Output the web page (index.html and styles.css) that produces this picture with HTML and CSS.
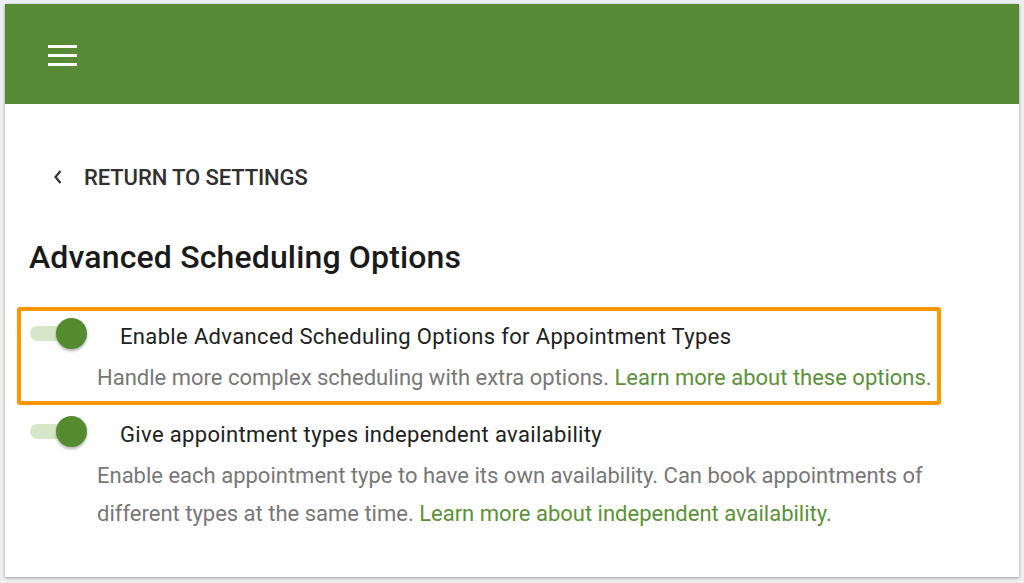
FILE: index.html
```html
<!DOCTYPE html>
<html lang="en">
<head>
<meta charset="utf-8">
<title>Advanced Scheduling Options</title>
<link rel="stylesheet" href="styles.css">
</head>
<body>
<div class="card">
  <header class="topbar">
    <svg class="menu" width="29" height="21" viewBox="0 0 29 21" aria-hidden="true">
      <rect x="0" y="0" width="29" height="3" fill="#fff"/>
      <rect x="0" y="9" width="29" height="3" fill="#fff"/>
      <rect x="0" y="18" width="29" height="3" fill="#fff"/>
    </svg>
  </header>
  <main class="content">
    <a class="back" href="#">
      <svg class="chev" width="10" height="16" viewBox="0 0 10 16" aria-hidden="true">
        <path d="M7.5 2 L2.5 8 L7.5 14" fill="none" stroke="#333" stroke-width="2.2"/>
      </svg>
      <span>RETURN TO SETTINGS</span>
    </a>
    <h1 class="title">Advanced Scheduling Options</h1>
    <div class="options">
      <div class="option highlight">
        <div class="row">
          <span class="toggle"><span class="track"></span><span class="thumb"></span></span>
          <span class="label">Enable Advanced Scheduling Options for Appointment Types</span>
        </div>
        <p class="desc">Handle more complex scheduling with extra options. <a href="#">Learn more about these options.</a></p>
      </div>
      <div class="option">
        <div class="row">
          <span class="toggle"><span class="track"></span><span class="thumb"></span></span>
          <span class="label">Give appointment types independent availability</span>
        </div>
        <p class="desc">Enable each appointment type to have its own availability. Can book appointments of different types at the same time. <a href="#">Learn more about independent availability.</a></p>
      </div>
    </div>
  </main>
</div>
</body>
</html>
```
FILE: styles.css
```css
html, body {
  margin: 0;
  padding: 0;
}
body {
  background: #eceef0;
  font-family: Roboto, "Liberation Sans", Arial, sans-serif;
  padding: 4px 5px 0 5px;
  height: 583px;
  box-sizing: border-box;
  overflow: hidden;
}
.card {
  background: #fff;
  height: 573px;
  box-shadow: 0 1px 3px rgba(0,0,0,0.35);
}
.topbar {
  height: 100px;
  background: #578a34;
  display: flex;
  align-items: center;
  padding-left: 43px;
}
.menu {
  display: block;
  margin-top: 2px;
}
.content {
  padding: 60px 0 0 24px;
}
.back {
  display: flex;
  align-items: center;
  height: 26px;
  color: #303030;
  text-decoration: none;
  font-weight: 500;
  font-size: 22px;
  letter-spacing: -0.1px;
}
.chev {
  display: block;
  margin-left: 24px;
  margin-right: 21px;
}
.title {
  margin: 47px 0 0 0;
  font-size: 32px;
  font-weight: 500;
  line-height: 40px;
  color: #1a1a1a;
  letter-spacing: 0.15px;
}
.options {
  margin: 30px 0 0 -12px;
  width: 924px;
}
.option {
  border: 4px solid transparent;
  border-radius: 3px;
  padding: 6px 4px 4px 9px;
}
.option + .option {
  margin-top: 3px;
  border-top-width: 0;
  padding-top: 7px;
}
.option.highlight {
  border-color: #ff9800;
}
.row {
  display: flex;
  align-items: center;
  height: 34px;
}
.toggle {
  position: relative;
  width: 58px;
  height: 34px;
  flex: none;
}
.track {
  position: absolute;
  left: 0;
  top: 9px;
  width: 54px;
  height: 15px;
  border-radius: 8px;
  background: #d6e6c8;
}
.thumb {
  position: absolute;
  left: 26px;
  top: 1px;
  width: 31px;
  height: 31px;
  border-radius: 50%;
  background: #558b2f;
  box-shadow: 0 2px 3px rgba(0,0,0,0.3);
}
.label {
  margin-left: 32px;
  padding-top: 4px;
  font-size: 22px;
  color: #212121;
  letter-spacing: 0.35px;
}
.desc {
  margin: 8px 0 0 0;
  padding-left: 67px;
  font-size: 22px;
  line-height: 38px;
  color: #777;
}
.desc a {
  color: #5a9237;
  text-decoration: none;
}
```
